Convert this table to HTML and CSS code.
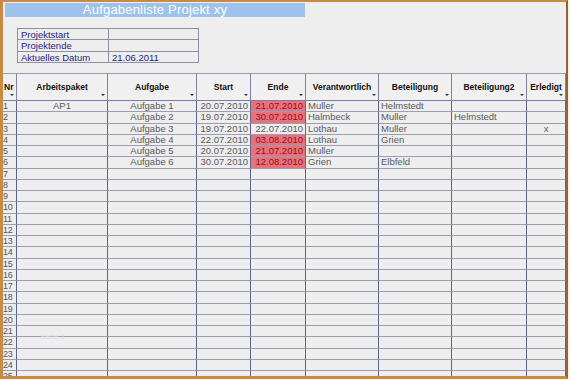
FILE: index.html
```html
<!DOCTYPE html>
<html lang="de">
<head>
<meta charset="utf-8">
<title>Aufgabenliste Projekt xy</title>
<link rel="stylesheet" href="styles.css">
</head>
<body>
<div class="frame">
  <div class="title">Aufgabenliste Projekt xy</div>
  <div class="info">
    <div class="lbl">Projektstart</div><div class="val"></div>
    <div class="lbl">Projektende</div><div class="val"></div>
    <div class="lbl">Aktuelles Datum</div><div class="val">21.06.2011</div>
  </div>
  <div class="sheet">
    <div class="h nr">Nr<span class="dd"></span></div>
    <div class="h">Arbeitspaket<span class="dd"></span></div>
    <div class="h">Aufgabe<span class="dd"></span></div>
    <div class="h">Start<span class="dd"></span></div>
    <div class="h">Ende<span class="dd"></span></div>
    <div class="h">Verantwortlich<span class="dd"></span></div>
    <div class="h">Beteiligung<span class="dd"></span></div>
    <div class="h">Beteiligung2<span class="dd"></span></div>
    <div class="h">Erledigt<span class="dd"></span></div>

    <div class="c n">1</div><div class="c ctr">AP1</div><div class="c ctr">Aufgabe 1</div><div class="c r">20.07.2010</div><div class="c r red">21.07.2010</div><div class="c">Muller</div><div class="c">Helmstedt</div><div class="c"></div><div class="c"></div>
    <div class="c n">2</div><div class="c"></div><div class="c ctr">Aufgabe 2</div><div class="c r">19.07.2010</div><div class="c r red">30.07.2010</div><div class="c">Halmbeck</div><div class="c">Muller</div><div class="c">Helmstedt</div><div class="c"></div>
    <div class="c n">3</div><div class="c"></div><div class="c ctr">Aufgabe 3</div><div class="c r">19.07.2010</div><div class="c r">22.07.2010</div><div class="c">Lothau</div><div class="c">Muller</div><div class="c"></div><div class="c ctr">x</div>
    <div class="c n">4</div><div class="c"></div><div class="c ctr">Aufgabe 4</div><div class="c r">22.07.2010</div><div class="c r red">03.08.2010</div><div class="c">Lothau</div><div class="c">Grien</div><div class="c"></div><div class="c"></div>
    <div class="c n">5</div><div class="c"></div><div class="c ctr">Aufgabe 5</div><div class="c r">20.07.2010</div><div class="c r red">21.07.2010</div><div class="c">Muller</div><div class="c"></div><div class="c"></div><div class="c"></div>
    <div class="c n">6</div><div class="c"></div><div class="c ctr">Aufgabe 6</div><div class="c r">30.07.2010</div><div class="c r red">12.08.2010</div><div class="c">Grien</div><div class="c">Elbfeld</div><div class="c"></div><div class="c"></div>
  </div>
  <div class="ghost">Seite 1</div>
</div>
<script src="rows.js"></script>
</body>
</html>
```

FILE: rows.js
```js
(function () {
  var sheet = document.querySelector('.sheet');
  for (var i = 7; i <= 25; i++) {
    var n = document.createElement('div');
    n.className = 'c n';
    n.textContent = String(i);
    sheet.appendChild(n);
    for (var k = 0; k < 8; k++) {
      var d = document.createElement('div');
      d.className = 'c';
      sheet.appendChild(d);
    }
  }
})();
```

FILE: styles.css
```css
html, body {
  margin: 0;
  padding: 0;
  background: #f4f2ee;
}
body {
  width: 570px;
  height: 380px;
  overflow: hidden;
  font-family: "Liberation Sans", Arial, sans-serif;
}
.frame {
  position: relative;
  box-sizing: border-box;
  width: 568px;
  height: 379px;
  border-left: 3px solid #c98a44;
  border-top: 2px solid #c98a44;
  border-bottom: 3px solid #c98a44;
  border-right: 2px solid #8e6630;
  background: #eeeeee;
  overflow: hidden;
}
.title {
  margin: 1px 0 0 2px;
  width: 300px;
  height: 14px;
  background: #9dc3ec;
  color: #ffffff;
  font-size: 13px;
  line-height: 14px;
  text-align: center;
  letter-spacing: 0.2px;
}
.info {
  display: grid;
  grid-template-columns: 91px 90px;
  grid-auto-rows: 11.4px;
  width: 181px;
  margin: 11px 0 0 14px;
  border-top: 1px solid #8f8fa0;
  border-left: 1px solid #8f8fa0;
  color: #1d1d85;
  font-size: 9.5px;
  line-height: 11px;
}
.info > div {
  border-right: 1px solid #8f8fa0;
  border-bottom: 1px solid #8f8fa0;
  padding-left: 3px;
  white-space: nowrap;
}
.sheet {
  display: grid;
  grid-template-columns: 14px 91px 89px 54px 55px 73px 73px 75px 1fr;
  grid-template-rows: 27px;
  grid-auto-rows: 11.25px;
  margin-top: 10px;
  border-top: 1px solid #9a9ab4;
}
.h {
  position: relative;
  display: flex;
  align-items: center;
  justify-content: center;
  border-right: 1px solid #8080a8;
  border-bottom: 1px solid #7c7ca0;
  background: #f0f0f0;
  font-size: 8.5px;
  font-weight: bold;
  color: #111111;
  white-space: nowrap;
  overflow: hidden;
}
.h.nr {
  align-items: flex-start;
  justify-content: flex-start;
  padding: 8px 0 0 1px;
}
.dd {
  position: absolute;
  right: 2px;
  bottom: 4px;
  width: 0;
  height: 0;
  border-left: 2px solid transparent;
  border-right: 2px solid transparent;
  border-top: 2px solid #333;
}
.c {
  box-sizing: border-box;
  border-right: 1px solid #62628e;
  border-bottom: 1px solid #9c9cb2;
  font-size: 9.5px;
  line-height: 10.5px;
  color: #5a5a5a;
  padding: 0 2px;
  white-space: nowrap;
}
.c.n {
  padding: 0;
  font-size: 9px;
  letter-spacing: -0.3px;
  color: #555;
}
.c.ctr { text-align: center; }
.c.r { text-align: right; }
.c.red {
  background: #e8727b;
  color: #9a0d18;
}
.ghost {
  position: absolute;
  left: 37px;
  top: 330px;
  font-size: 8px;
  color: #e0e0e0;
}
```
